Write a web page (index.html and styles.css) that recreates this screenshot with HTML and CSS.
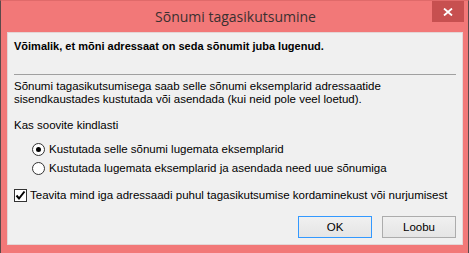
FILE: index.html
```html
<!DOCTYPE html>
<html lang="et">
<head>
    <meta charset="UTF-8">
    <title>Sõnumi tagasikutsumine</title>
    <link rel="stylesheet" href="styles.css">
</head>
<body>
    <div class="window">
        <div class="titlebar">
            <span class="side"></span>
            <span class="title">Sõnumi tagasikutsumine</span>
            <span class="side right">
                <button class="close" aria-label="Sulge">
                    <svg width="10" height="8" viewBox="0 0 10 8">
                        <path d="M1 0.5 L9 7.5 M9 0.5 L1 7.5" stroke="#fff" stroke-width="1.8" fill="none"/>
                    </svg>
                </button>
            </span>
        </div>

        <div class="client">
            <p class="warning">Võimalik, et mõni adressaat on seda sõnumit juba lugenud.</p>
            <hr class="sep">
            <p class="info">Sõnumi tagasikutsumisega saab selle sõnumi eksemplarid adressaatide sisendkaustades kustutada või asendada (kui neid pole veel loetud).</p>
            <p class="question">Kas soovite kindlasti</p>

            <div class="options">
                <label class="option"><span class="radio checked"></span>Kustutada selle sõnumi lugemata eksemplarid</label>
                <label class="option"><span class="radio"></span>Kustutada lugemata eksemplarid ja asendada need uue sõnumiga</label>
            </div>

            <label class="notify">
                <span class="check">
                    <svg width="11" height="11" viewBox="0 0 11 11">
                        <path d="M1.5 5.5 L4 8.5 L9.5 1.5" stroke="#000" stroke-width="2" fill="none"/>
                    </svg>
                </span>
                Teavita mind iga adressaadi puhul tagasikutsumise kordaminekust või nurjumisest
            </label>

            <div class="buttons">
                <button class="btn default">OK</button>
                <button class="btn">Loobu</button>
            </div>
        </div>
    </div>
</body>
</html>
```

FILE: styles.css
```css
body {
    margin: 0;
    background-color: #ffffff;
    font-family: "Liberation Sans", Arial, sans-serif;
}
.window {
    width: 456px;
    height: 244px;
    border: 1px solid #5a4a4a;
    border-top-color: #e06a6a;
    background-color: #f27878;
    padding: 0 5px 8px 6px;
}
.titlebar {
    height: 31px;
    display: flex;
    align-items: flex-start;
    margin-right: -1px;
}
.side {
    flex: 1;
    display: flex;
}
.side.right {
    justify-content: flex-end;
}
.title {
    font-family: "Open Sans", "Noto Sans", sans-serif;
    font-size: 14px;
    color: #3a3030;
    line-height: 31px;
}
.close {
    width: 32px;
    height: 21px;
    border: none;
    padding: 0;
    background-color: #c75050;
    display: flex;
    align-items: center;
    justify-content: center;
}
.close svg {
    display: block;
}
.client {
    height: 211px;
    border: 1px solid #e4d6d6;
    background-color: #f0f0f0;
    padding: 0 6px;
    font-size: 11.5px;
    line-height: 13px;
    color: #000;
}
.client p {
    margin: 0;
}
.warning {
    font-weight: bold;
    font-size: 11px;
    padding-top: 7px;
}
.sep {
    border: none;
    border-top: 1px solid #a0a0a0;
    margin: 21px 0 5px;
}
.info {
    width: 390px;
}
.client .question {
    margin-top: 13px;
}
.options {
    margin-top: 8px;
    padding-left: 18px;
}
.option, .notify {
    display: flex;
    align-items: center;
    height: 19px;
}
.radio {
    width: 11px;
    height: 11px;
    border: 1px solid #333;
    border-radius: 50%;
    background-color: #fff;
    margin-right: 4px;
    display: flex;
    align-items: center;
    justify-content: center;
}
.radio.checked::after {
    content: "";
    width: 5px;
    height: 5px;
    border-radius: 50%;
    background-color: #000;
}
.notify {
    margin-top: 8px;
}
.check {
    width: 11px;
    height: 11px;
    border: 1px solid #333;
    background-color: #fff;
    margin-right: 3px;
    display: flex;
    align-items: center;
    justify-content: center;
}
.buttons {
    display: flex;
    justify-content: flex-end;
    gap: 10px;
    margin-top: 11px;
}
.btn {
    width: 74px;
    height: 22px;
    border: 1px solid #acacac;
    background: linear-gradient(#f0f0f0, #e5e5e5);
    font-family: "Liberation Sans", Arial, sans-serif;
    font-size: 11.5px;
    color: #000;
    padding: 0;
}
.btn.default {
    border-color: #3399ff;
}
```
